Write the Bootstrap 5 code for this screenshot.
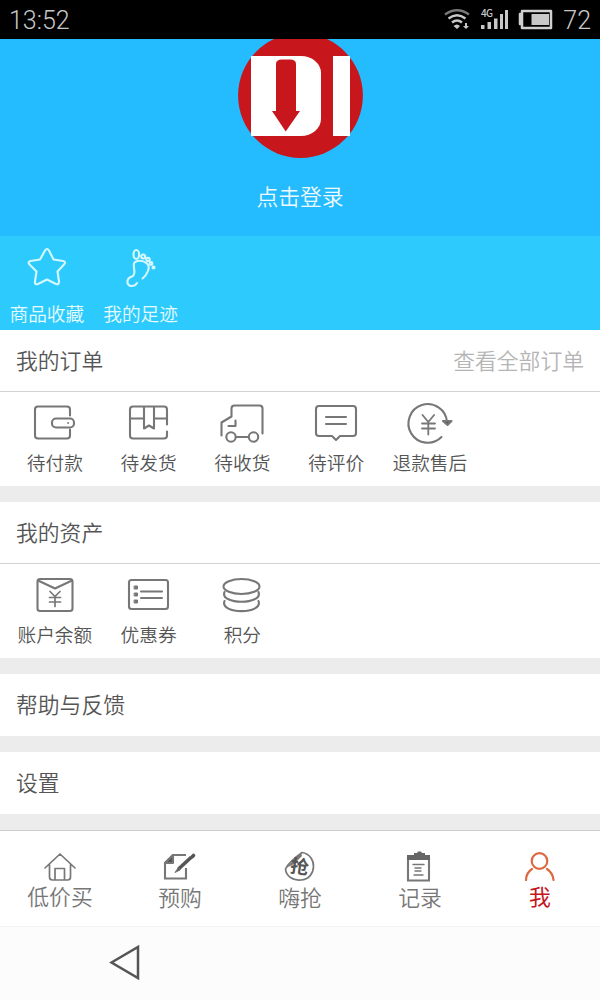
<!DOCTYPE html>
<html lang="zh-CN">
<head>
<meta charset="utf-8">
<meta name="viewport" content="width=device-width, initial-scale=1">
<title>我</title>
<link href="https://cdn.jsdelivr.net/npm/bootstrap@5.3.0/dist/css/bootstrap.min.css" rel="stylesheet">
<style>
body{font-family:Roboto,"Noto Sans CJK SC",sans-serif;font-size:21.8px;font-weight:350;color:#555;background:#ececec;line-height:30px}
svg{display:block;flex:none;fill:none;stroke:#777;stroke-width:2.1;stroke-linecap:round;stroke-linejoin:round}
svg text{stroke:none;font-family:"Noto Sans CJK SC",sans-serif}
.phone{width:600px;height:1000px}
.status{height:39px;background:#000;color:#c8c8c8;font-size:25px;font-weight:300;padding:2px 9px 0}
.hero{height:197px;background:#24bcff}
.logo-disc{width:125px;height:119px}
.login{margin-top:25px;color:#effaff}
.strip{height:94px;background:#2dcbfd;color:#e5faff}
.strip svg{stroke:#d5f8ff}
.tile{width:93.75px;font-size:18.7px;line-height:26px;white-space:nowrap}
.tile svg{margin-bottom:2px}
.title-row{height:62px;padding:2px 16px 0;border-bottom:1px solid #d2d2d2}
.tiles{height:94px;padding-left:8px}
.gap-bar{margin-bottom:16px}
.single{height:62px;padding:2px 16px 0}
.more{color:#b5b5b5}
.tabs{height:96px;border-top:1px solid #ccc;color:#777}
.tabs svg{margin-bottom:1px}
.tabs .active{color:#c5161d}
.tabs .active svg{margin-bottom:2px}
.sysnav{height:74px;background:#fcfcfc;border-top:1px solid #f3f3f3}
</style>
</head>
<body>
<main class="phone overflow-hidden d-flex flex-column">
  <header class="status d-flex justify-content-between flex-shrink-0">
    <span class="pt-1">13:52</span>
    <div class="d-flex">
      <svg width="117" height="34" viewBox="442 2 117 34" style="stroke:none;fill:#c8c8c8">
        <g fill="none" stroke="#c8c8c8" stroke-width="2.4" stroke-linecap="butt"><path d="M445 14.5Q457 6 469 14.5" stroke="#777"/><path d="M448.500 18.500Q457 12 465.500 18.500M452 22.500Q457 18.500 462 22.500"/></g>
        <path d="M453.500 26Q457 23 460 26L457 29zM465 23v3h-2l3 3 3-3h-2v-3z"/>
        <text x="481" y="17" font-size="10" font-weight="500" textLength="12">4G</text>
        <path d="M481 25h3.500v4H481zM487.500 22h3.500v7h-3.500zM494 18.500h3.500V29H494zM500 14h3v15h-3zM505 10h3v19h-3z"/>
        <path d="M522 11h29v17h-29zM520 14v10" fill="none" stroke="#d0d0d0" stroke-width="2.500"/><path d="M531.500 14H549v11h-17.500z"/>
      </svg>
      <span class="pt-1 ms-1">72</span>
    </div>
  </header>
  <section class="hero d-flex flex-column align-items-center flex-shrink-0">
    <svg class="logo-disc" viewBox="238 39 125 119" style="stroke:none">
      <circle cx="300.500" cy="95.500" r="62.400" fill="#c8161d"/>
      <rect x="270" y="56" width="51" height="80" rx="20" ry="17" fill="#fff"/>
      <rect x="251" y="56" width="48" height="80" fill="#fff"/>
      <rect x="333" y="56" width="17" height="80" fill="#fff"/>
      <path d="M276 64q0-4.500 6-4.500h8q6 0 6 4.500v47h4l-14.300 20.500L272 111h4z" fill="#c8161d"/>
    </svg>
    <div class="login">点击登录</div>
  </section>
  <nav class="strip d-flex flex-shrink-0">
    <div class="tile d-flex flex-column align-items-center">
      <svg width="60" height="64" viewBox="17 236 60 64"><path d="M45 250.500q2-3 4 0l4.500 9 9.500 1.500q3.500.8 1 3.500l-6.500 7 1.500 10q0 3.500-3 2.500l-9-4.500-9 4.500q-3.500 1-3-2.500l1.500-10-7-7q-2-2.700 1-3.500l9.500-1.500z"/></svg>商品收藏
    </div>
    <div class="tile d-flex flex-column align-items-center">
      <svg width="60" height="64" viewBox="111 236 60 64"><path d="M142.500 278.500C147 275 151 267 147 263.500Q141 259 135 262C131 265 138 274 132 276.500C127 277.500 125.500 284 130.500 286Q135 286.500 137 283"/><ellipse cx="136.300" cy="254.500" rx="2.800" ry="4.500"/><circle cx="143.200" cy="256.500" r="2"/><circle cx="148" cy="259.500" r="1.700"/><circle cx="151" cy="263.500" r="1.400"/><circle cx="153.500" cy="267.500" r="1"/></svg>我的足迹
    </div>
  </nav>
  <section class="bg-white gap-bar flex-shrink-0">
    <div class="title-row d-flex align-items-center justify-content-between"><span>我的订单</span><span class="more">查看全部订单</span></div>
    <div class="tiles d-flex">
      <div class="tile d-flex flex-column align-items-center"><svg width="60" height="57" viewBox="25 392.500 60 57"><path d="M70 416v-6q0-3-3-3H38q-3 0-3 3v26q0 3 3 3h29q3 0 3-3v-6"/><rect x="52" y="419" width="22" height="9" rx="4"/><circle cx="68" cy="423.500" r=".5" stroke-width="1"/></svg>待付款</div>
      <div class="tile d-flex flex-column align-items-center"><svg width="60" height="57" viewBox="119 392.500 60 57"><path d="M167 425v-15q0-3-3-3h-31q-3 0-3 3v26q0 3 3 3h31q3 0 3-3v-4M130 419h14m10 0h13M144 407v22l5-3 5 3v-22"/></svg>待发货</div>
      <div class="tile d-flex flex-column align-items-center"><svg width="60" height="57" viewBox="212.500 392.500 60 57"><path d="M222 436v-13l10-6v-8q0-3 3-3h25q3 0 3 3v25M236 421v5.500h-7M237 437.500h12"/><circle cx="231.500" cy="437.500" r="4.700"/><circle cx="254" cy="437.500" r="4.700"/></svg>待收货</div>
      <div class="tile d-flex flex-column align-items-center"><svg width="60" height="57" viewBox="306 392 60 57"><path d="M319 406h34q3 0 3 3v24q0 3-3 3h-13l-4 4-4-4h-13q-3 0-3-3v-24q0-3 3-3zM326 417h20M326 424h20"/></svg>待评价</div>
      <div class="tile d-flex flex-column align-items-center"><svg width="60" height="57" viewBox="400 392 60 57"><path d="M441.500 437A19.300 19.300 0 1 1 447 422"/><path d="M443 421l4.500 4 4-4z" fill="#555"/><path d="M422.500 415l5.800 7 5.800-7M422 423.500h13M422 428.500h13M428.300 422v12.500" stroke-width="1.800"/></svg>退款售后</div>
    </div>
  </section>
  <section class="bg-white gap-bar flex-shrink-0">
    <div class="title-row d-flex align-items-center"><span>我的资产</span></div>
    <div class="tiles d-flex">
      <div class="tile d-flex flex-column align-items-center"><svg width="60" height="57" viewBox="25 564.500 60 57"><rect x="37.500" y="579.500" width="35" height="32" rx="2.500"/><path d="M38 581l17 8 17-8"/><path d="M50 592l5 5 5-5M49.500 598h11M49.500 602.500h11M55 597v10" stroke-width="1.700"/></svg>账户余额</div>
      <div class="tile d-flex flex-column align-items-center"><svg width="60" height="57" viewBox="118.500 564.500 60 57"><rect x="128.500" y="580.500" width="39" height="29" rx="2.500"/><path d="M140.500 592h21M140.500 598.500h21"/><path d="M134 586.500h3v3h-3zM134 593.500h3v3h-3zM134 600.500h3v3h-3z" fill="#777" stroke-width="1"/></svg>优惠券</div>
      <div class="tile d-flex flex-column align-items-center"><svg width="60" height="57" viewBox="212 564 60 57"><ellipse cx="241.500" cy="586.500" rx="18" ry="7.500"/><path d="M224.500 592c-5 13 39 13 34 0M224.500 601c-5 13.500 39 13.500 34 0"/></svg>积分</div>
    </div>
  </section>
  <section class="single bg-white gap-bar d-flex align-items-center flex-shrink-0">帮助与反馈</section>
  <section class="single bg-white gap-bar d-flex align-items-center flex-shrink-0">设置</section>
  <nav class="tabs bg-white d-flex flex-shrink-0">
    <div class="col d-flex flex-column align-items-center"><svg width="60" height="51" viewBox="30 831 60 51" style="stroke-width:1.700"><path d="M45 868l15-14 15 14M49.500 864.500V877q0 3 3 3h15q3 0 3-3v-12.500M55 880v-11.500h9.500V880"/></svg>低价买</div>
    <div class="col d-flex flex-column align-items-center"><svg width="60" height="52" viewBox="151 831 60 52"><path d="M187 855h-13l-8 8v15.500h21V868" stroke-linecap="butt" stroke-linejoin="miter"/><path d="M174 855v8h-8z" fill="#555"/><path d="M192.500 857l-13 12" stroke="#555" stroke-width="3.600" stroke-linecap="butt"/><path d="M194.500 855.500l-1 1" stroke="#555" stroke-width="3.600"/><path d="M179 868l-3 4.500 5-2.500z" fill="#555" stroke-width="1"/></svg>预购</div>
    <div class="col d-flex flex-column align-items-center"><svg width="60" height="52" viewBox="270 831 60 52"><path d="M302 852.500C318 855 317 879 301 880C293 881 286 876 285.500 869C288 863 296 857 302 852.500z" stroke-width="1.700"/><path d="M286 868l9-9 6-6 1 3-8 8z" fill="#777" stroke="none"/><text x="290.500" y="873.500" font-size="18.500" font-weight="700" fill="#555" transform="rotate(8 300 866)">抢</text></svg>嗨抢</div>
    <div class="col d-flex flex-column align-items-center"><svg width="60" height="52" viewBox="391 831 60 52"><path d="M409 858v22.500h21V858" stroke-linejoin="miter"/><path d="M408 855h7v-2h3l1-1.500h3l1 1.500h3v2h5v5h-23z" fill="#666" stroke="none"/><path d="M414 864.500h11M416 868h6M416 871h6M415 875h9" stroke-width="1.400"/></svg>记录</div>
    <div class="col d-flex flex-column align-items-center active"><svg width="60" height="50" viewBox="510 831 60 50" style="stroke:#dc6941;stroke-width:2.200"><circle cx="539.500" cy="861" r="7.800"/><path d="M532 869q-6 4-6 11M547 869q6 4 6.500 11"/></svg><span class="fw-normal">我</span></div>
  </nav>
  <footer class="sysnav flex-shrink-0"><svg width="180" height="73" viewBox="0 927 180 73" style="stroke:#555;stroke-width:2.500"><path d="M111.500 962.500L138 947v31z" stroke-linejoin="miter"/></svg></footer>
</main>
<script src="https://cdn.jsdelivr.net/npm/bootstrap@5.3.0/dist/js/bootstrap.bundle.min.js"></script>
</body>
</html>
